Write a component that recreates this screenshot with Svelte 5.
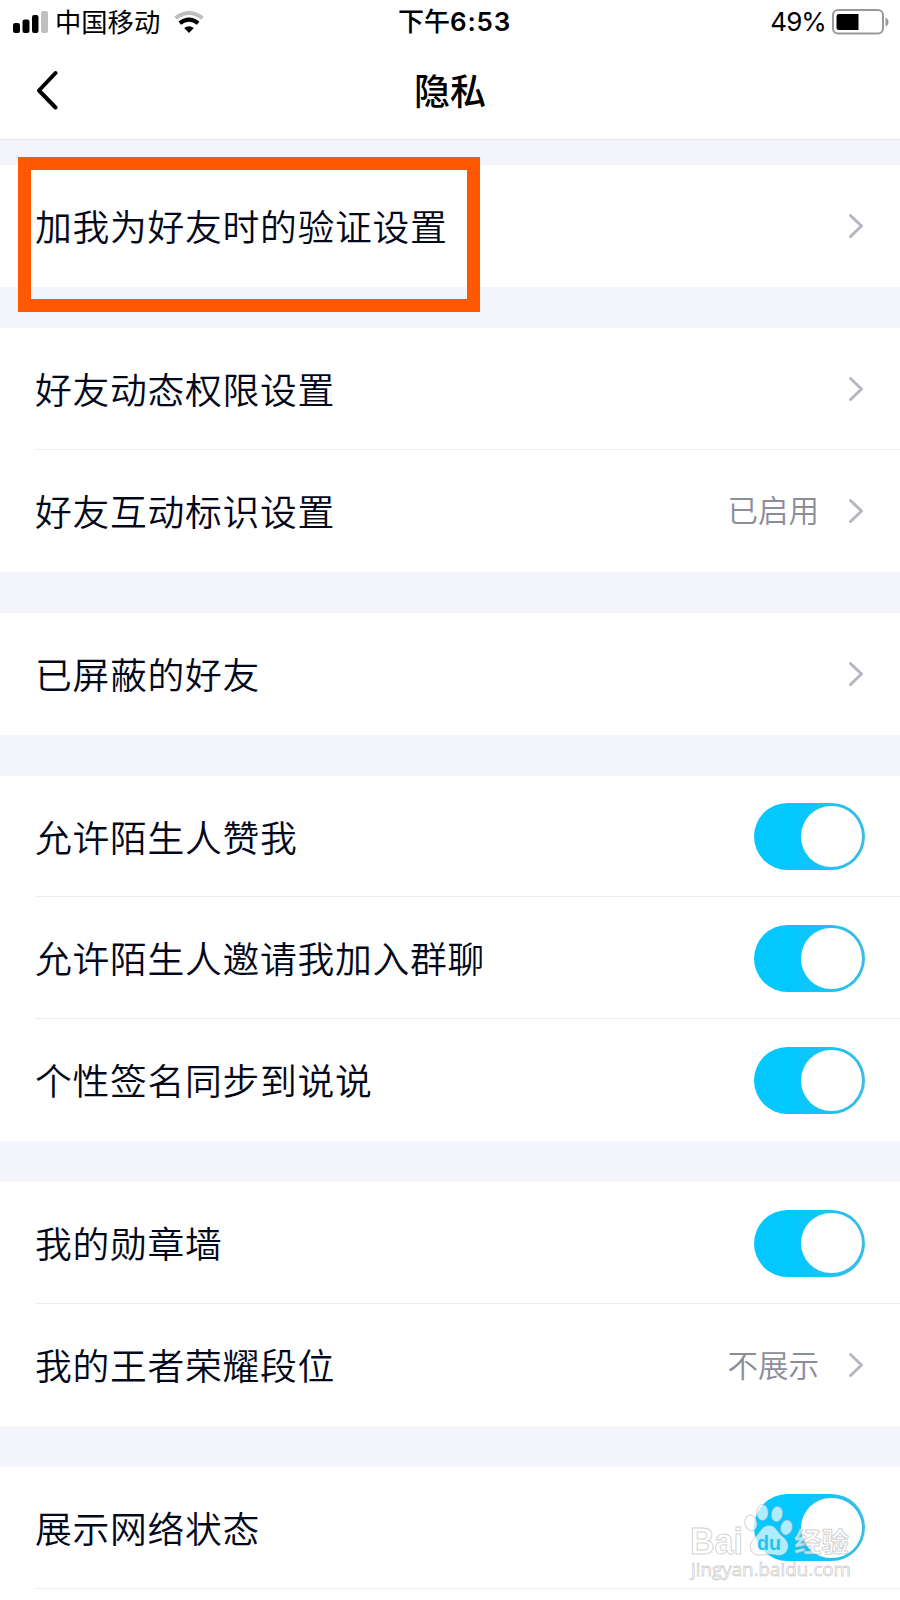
<script lang="ts">
	interface Row {
		label: string;
		value?: string;
		toggle?: boolean;
		marked?: boolean;
	}

	let groups: Row[][] = $state([
		[{ label: "加我为好友时的验证设置", marked: true }],
		[{ label: "好友动态权限设置" }, { label: "好友互动标识设置", value: "已启用" }],
		[{ label: "已屏蔽的好友" }],
		[
			{ label: "允许陌生人赞我", toggle: true },
			{ label: "允许陌生人邀请我加入群聊", toggle: true },
			{ label: "个性签名同步到说说", toggle: true },
		],
		[
			{ label: "我的勋章墙", toggle: true },
			{ label: "我的王者荣耀段位", value: "不展示" },
		],
		[{ label: "展示网络状态", toggle: true }],
	]);
</script>

<div class="screen">
	<header>
		<div class="status-bar">
			<div class="status-left">
				<svg class="signal" width="36" height="22" viewBox="0 0 36 22" aria-hidden="true">
					<rect x="0" y="12" width="7" height="10" rx="2.2" />
					<rect x="9.5" y="8.5" width="7" height="13.5" rx="2.2" />
					<rect x="19" y="4" width="6.5" height="18" rx="2.2" />
					<rect x="28" y="0" width="7" height="22" rx="2.2" fill="#bfbfbf" />
				</svg>
				<span class="carrier">中国移动</span>
				<svg class="wifi" width="30" height="22" viewBox="0 0 30 22" fill="none" aria-hidden="true">
					<path d="M1.5 7.2Q15 -3.2 28.5 7.2" stroke="#bfbfbf" stroke-width="4" />
					<path d="M5.8 12.2Q15 5 24.2 12.2" stroke="#000" stroke-width="4" />
					<path d="M10.2 17Q15 13.4 19.8 17L15 22Z" fill="#000" />
				</svg>
			</div>
			<span class="clock">下午<b>6:53</b></span>
			<div class="status-right">
				<span class="percent">49%</span>
				<svg class="battery" width="57" height="26" viewBox="0 0 57 26" aria-hidden="true">
					<rect x="1" y="1" width="50" height="23.5" rx="5" fill="#fff" stroke="#999" stroke-width="2" />
					<path d="M7 5H26.5V21H7Q4.5 21 4.5 18.5V7.5Q4.5 5 7 5Z" />
					<path d="M53.5 8.5Q56.5 10 56.5 13T53.5 17.5Z" fill="#999" />
				</svg>
			</div>
		</div>
		<nav>
			<button class="back" aria-label="返回">
				<svg width="24" height="40" viewBox="0 0 24 40" fill="none">
					<path d="M19.500 3L3 20.5L19.500 37.5" stroke="#000" stroke-width="4" stroke-linecap="round" stroke-linejoin="round" />
				</svg>
			</button>
			<h1>隐私</h1>
		</nav>
	</header>

	<main>
		{#each groups as rows}
			<section>
				{#each rows as row}
					<div class="row">
						<span class="label">{row.label}</span>
						{#if row.toggle !== undefined}
							<button
								class="switch"
								class:on={row.toggle}
								role="switch"
								aria-checked={row.toggle}
								aria-label={row.label}
								onclick={() => (row.toggle = !row.toggle)}
							>
								<span class="knob"></span>
							</button>
						{:else}
							{#if row.value}
								<span class="value">{row.value}</span>
							{/if}
							<svg class="chevron" width="18" height="28" viewBox="0 0 18 28" fill="none" aria-hidden="true">
								<path d="M3.500 3.5L14.500 14L3.500 24.5" stroke="#b5b6c0" stroke-width="3" stroke-linecap="round" stroke-linejoin="round" />
							</svg>
						{/if}
						{#if row.marked}
							<div class="marker"></div>
						{/if}
					</div>
				{/each}
			</section>
		{/each}
	</main>

	<svg class="watermark" width="180" height="90" viewBox="0 0 180 90" aria-hidden="true">
		<g fill="#fff" fill-opacity="0.68" stroke="#a4a4a4" stroke-opacity="0.5" stroke-width="1">
			<text x="10" y="53" font-size="36" font-weight="700" textLength="53" lengthAdjust="spacingAndGlyphs">Bai</text>
			<ellipse cx="71" cy="22" rx="6" ry="8" transform="rotate(-15 71 22)" />
			<ellipse cx="82.5" cy="11.5" rx="5.7" ry="8" />
			<ellipse cx="97" cy="13" rx="5.7" ry="7.7" transform="rotate(10 97 13)" />
			<ellipse cx="106.5" cy="26.5" rx="5.8" ry="7.5" transform="rotate(15 106.5 26.5)" />
			<path d="M89 24.5C96 24.5 97 31 102 35C107 39 109.500 43 107.500 48.500C105.500 54 100 55 96 54C91 53 87 53 82 54C76 55 71.500 52 70.500 47C69.500 41 75 37 78 33C81 29 83 24.500 89 24.500Z" />
			<text class="cn" x="114" y="51" font-size="27.5" font-weight="700">经验</text>
			<text class="url" x="11" y="75" font-size="18" stroke-width="0.8" textLength="160" lengthAdjust="spacingAndGlyphs">jingyan.baidu.com</text>
		</g>
		<text class="du" x="77" y="49" font-size="20" font-weight="700" fill="#23c3ee" textLength="24" lengthAdjust="spacingAndGlyphs">du</text>
	</svg>
</div>

<style>
	:global(body) {
		margin: 0;
		background: #fff;
	}

	.screen {
		position: relative;
		width: 900px;
		height: 1600px;
		overflow: hidden;
		background: #f4f5fa;
		color: #03081a;
		font-family: "Noto Sans CJK SC", sans-serif;
	}

	button {
		padding: 0;
		border: 0;
		background: none;
	}

	svg {
		display: block;
		flex: none;
	}

	/* Header */
	header {
		box-sizing: border-box;
		height: 140px;
		border-bottom: 1px solid #e6e7eb;
		background: #fff;
		color: #000;
	}

	.status-bar {
		display: grid;
		grid-template-columns: 1fr auto 1fr;
		align-items: center;
		height: 43px;
		padding: 0 11px 0 13px;
		font-size: 26px;
		line-height: 42px;
	}

	.status-left,
	.status-right {
		display: flex;
		align-items: center;
	}

	.carrier {
		margin: -2px 0 0 6px;
		font-size: 26.3px;
	}

	.wifi {
		margin-left: 14px;
	}

	.clock {
		margin: -2px 0 0 7px;
		font-weight: 500;
		font-size: 26px;
	}

	.clock b {
		font-family: Inter, sans-serif;
		font-weight: 600;
		letter-spacing: 0.8px;
	}

	.status-right {
		justify-content: flex-end;
	}

	.percent {
		margin-right: 6px;
		font-family: Inter, sans-serif;
		font-size: 26px;
		letter-spacing: -0.9px;
	}

	nav {
		display: grid;
		grid-template-columns: 60px 1fr 60px;
		align-items: center;
		height: 94px;
	}

	.back {
		justify-self: end;
	}

	h1 {
		margin: -2px 0 0;
		font-size: 36px;
		font-weight: 500;
		line-height: 54px;
		text-align: center;
	}

	/* Settings list */
	main {
		display: flex;
		flex-direction: column;
		gap: 41px;
		padding-top: 25px;
	}

	section {
		background: #fff;
	}

	section:last-child {
		padding-bottom: 20px;
	}

	.row {
		position: relative;
		display: flex;
		align-items: center;
		box-sizing: border-box;
		height: 121.9px;
		padding: 0 35px;
	}

	.row:not(:last-child)::after,
	section:last-child .row::after {
		content: "";
		position: absolute;
		right: 0;
		bottom: 0;
		left: 35px;
		height: 1px;
		background: #ebecef;
	}

	.label {
		flex: 1;
		margin-top: -2px;
		font-size: 36.8px;
		font-weight: 350;
		letter-spacing: 0.7px;
		line-height: 56px;
		white-space: nowrap;
	}

	.value {
		margin: -3px 28px 0 0;
		color: #8b8d9b;
		font-size: 30.5px;
		font-weight: 350;
	}

	.switch {
		display: flex;
		align-items: center;
		justify-content: flex-start;
		box-sizing: border-box;
		width: 111px;
		height: 67px;
		padding: 0 3.5px;
		border-radius: 34px;
		background: #d8d9de;
	}

	.switch.on {
		justify-content: flex-end;
		background: linear-gradient(90deg, #03c8ff 35%, #28c0ee 80%, #3bbce6);
	}

	.knob {
		width: 60.5px;
		height: 60.5px;
		border-radius: 50%;
		background: #fff;
	}

	.marker {
		position: absolute;
		top: -8px;
		left: 17.5px;
		box-sizing: border-box;
		width: 462px;
		height: 155px;
		border: 13px solid #ff5800;
		z-index: 1;
	}

	/* Watermark over the last row */
	.watermark {
		position: absolute;
		top: 1501px;
		left: 680px;
		font-family: "Liberation Sans", sans-serif;
	}

	.watermark .cn {
		font-family: "Noto Sans CJK SC", sans-serif;
	}

	.watermark .url {
		font-family: "Open Sans", sans-serif;
	}
</style>
